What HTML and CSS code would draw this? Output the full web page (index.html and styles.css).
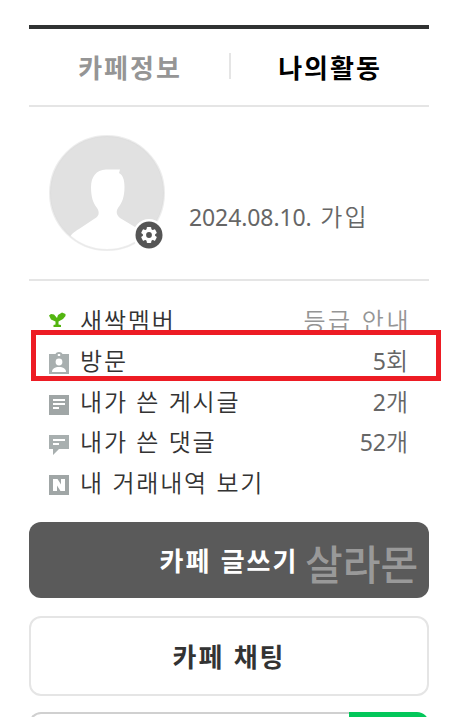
FILE: index.html
```html
<!DOCTYPE html>
<html lang="ko">
<head>
    <meta charset="utf-8">
    <title>나의활동</title>
    <link rel="stylesheet" href="styles.css">
</head>
<body>
    <div id="cafe-side">
        <div class="tabs">
            <a class="tab">카페정보</a>
            <a class="tab active">나의활동</a>
        </div>

        <div class="profile">
            <div class="avatar">
                <svg width="116" height="116" viewBox="0 0 116 116">
                    <defs>
                        <clipPath id="circle"><circle cx="58" cy="58" r="57"/></clipPath>
                    </defs>
                    <circle cx="58" cy="58" r="57" fill="#e1e1e1"/>
                    <path clip-path="url(#circle)" fill="#fff" d="M42 52C42 42 47 35 57 34.500L71 34.500L70 38C74 40 75.500 45 75.500 52C75.500 62 73 68 69 73C67 76 67 80 71 83L86 92C92 96 94 99 95 104V118H20V104C22 99 25 97 30 94L45 84C50 81 51 78 48 73C44 68 42 62 42 52Z"/>
                    <circle cx="58" cy="58" r="57" fill="none" stroke="#dcdcdc" stroke-opacity=".5" stroke-width="2"/>
                </svg>
                <svg class="setting" width="32" height="32" viewBox="0 0 32 32">
                    <circle cx="16" cy="16" r="16" fill="#fff"/>
                    <circle cx="16" cy="16" r="13.500" fill="#555"/>
                    <g fill="#fff">
                        <circle cx="16" cy="16" r="6.200"/>
                        <rect id="tooth" x="13.700" y="8" width="4.600" height="16" rx="1"/>
                        <use href="#tooth" transform="rotate(60 16 16)"/>
                        <use href="#tooth" transform="rotate(120 16 16)"/>
                    </g>
                    <circle cx="16" cy="16" r="2.900" fill="#555"/>
                </svg>
            </div>
            <p class="join-date"><span class="num">2024.08.10.</span> 가입</p>
        </div>

        <ul class="activity">
            <li>
                <svg class="icon icon-level" width="20" height="20" viewBox="0 0 20 20">
                    <path fill="#53b510" d="M0 4.500L2 3L5 3.500L8 7L9 4L13 1.500L16.500 3V5L14 8L9.500 10.500V13.500L12 14V16H4.500V14L6.500 13.500V10.500L2 8.500Z"/>
                </svg>
                <span class="name">새싹멤버</span>
                <span class="count guide">등급 안내</span>
            </li>
            <li>
                <svg class="icon icon-visit" width="20" height="22" viewBox="0 0 20 22">
                    <path fill="#a8afaf" fill-rule="evenodd" d="M0 2H6.500C7 .7 8.300 0 10 0S13 .7 13.500 2H20V22H0ZM8.800 2V4H11.200V2Z"/>
                    <circle cx="10" cy="10" r="3.400" fill="#fff"/>
                    <path fill="#fff" d="M3 20C3 16.500 6 15 10 15S17 16.500 17 20Z"/>
                </svg>
                <span class="name">방문</span>
                <span class="count"><span class="num">5</span>회</span>
            </li>
            <li>
                <svg class="icon" width="20" height="20" viewBox="0 0 20 20">
                    <path fill="#a0a6a6" d="M0 0H20V20H0Z"/>
                    <path fill="#fff" d="M4 4H16V6H4ZM4 8H16V10H4ZM4 12H10V14H4Z"/>
                </svg>
                <span class="name">내가 쓴 게시글</span>
                <span class="count"><span class="num">2</span>개</span>
            </li>
            <li>
                <svg class="icon" width="20" height="20" viewBox="0 0 20 20">
                    <path fill="#a8afaf" d="M0 0H20V14H10L4 20V14H0Z"/>
                    <path fill="#fff" d="M4 4H16V6H4ZM4 8H10V10H4Z"/>
                </svg>
                <span class="name">내가 쓴 댓글</span>
                <span class="count"><span class="num">52</span>개</span>
            </li>
            <li>
                <svg class="icon icon-trade" width="20" height="20" viewBox="0 0 20 20">
                    <path fill="#a0a6a6" d="M0 0H20V20H0Z"/>
                    <path fill="#fff" d="M4 4H8.500L12 9.500V4H16V16H11.500L8 10.500V16H4Z"/>
                </svg>
                <span class="name">내 거래내역 보기</span>
            </li>
        </ul>
        <div class="highlight"></div>

        <a class="btn btn-write">카페 글쓰기<span class="watermark">살라몬</span></a>
        <a class="btn btn-chat">카페 채팅</a>

        <div class="search">
            <div class="search-input"></div>
            <div class="search-button"></div>
        </div>
    </div>
</body>
</html>
```

FILE: styles.css
```css
* {
    box-sizing: border-box;
}

body {
    margin: 0;
    background-color: #fff;
    color: #333;
    font-family: "Noto Sans CJK KR", sans-serif;
    font-size: 24px;
    font-weight: 350;
}

#cafe-side {
    position: relative;
    width: 400px;
    margin: 25px 0 0 29px;
    border-top: 4px solid #303232;
}

/* Tabs */
.tabs {
    display: flex;
    height: 78px;
    border-bottom: 2px solid #e5e5e5;
}

.tab {
    flex: 1;
    padding: 19px 0 0 2px;
    line-height: 38px;
    text-align: center;
    font-size: 26px;
    font-weight: bold;
    letter-spacing: 2px;
    color: #959595;
}

.tab.active {
    color: #000;
    background: linear-gradient(#e5e5e5, #e5e5e5) no-repeat 0 24px / 2px 26px;
}

/* Profile */
.profile {
    display: flex;
    height: 174px;
    padding: 28px 20px 0;
    border-bottom: 2px solid #e5e5e5;
}

.avatar {
    position: relative;
    width: 116px;
    height: 116px;
}

.setting {
    position: absolute;
    left: 84px;
    top: 84px;
}

.join-date {
    margin: 62px 0 0 24px;
    line-height: 38px;
    letter-spacing: 2px;
    color: #666;
}

.num {
    font-family: "Noto Sans", sans-serif;
    font-size: 23px;
    font-weight: 400;
    letter-spacing: -0.1px;
}

/* Activity list */
.activity {
    list-style: none;
    height: 241px;
    margin: 0;
    padding: 18px 20px 0;
}

.activity li {
    display: flex;
    align-items: center;
    height: 40.500px;
}

.icon {
    margin-top: 9px;
}

.icon-level {
    margin-top: 4px;
}

.icon-visit {
    margin-top: 7px;
}

.icon-trade {
    margin-top: 8px;
}

.name {
    margin-left: 11px;
    letter-spacing: 1.800px;
    white-space: nowrap;
}

.count {
    margin-left: auto;
    letter-spacing: 1px;
    color: #666;
    white-space: nowrap;
}

.guide {
    letter-spacing: 2.500px;
    margin-right: -2px;
    color: #959595;
}

.highlight {
    position: absolute;
    left: 2px;
    top: 301px;
    width: 410px;
    height: 51px;
    border: 5px solid #ed1c24;
}

/* Buttons */
.btn {
    display: block;
    position: relative;
    border-radius: 12px;
    text-align: center;
    font-size: 26px;
    font-weight: bold;
    letter-spacing: 2px;
}

.btn-write {
    height: 76px;
    line-height: 76px;
    background-color: #5a5a5a;
    color: #fff;
}

.watermark {
    position: absolute;
    left: 276px;
    top: 2px;
    font-size: 41px;
    font-weight: 500;
    letter-spacing: 0;
    color: #999;
}

.btn-chat {
    height: 80px;
    margin-top: 18px;
    border: 2px solid #e5e5e5;
    line-height: 76px;
}

/* Search, only its top edge is visible */
.search {
    display: flex;
    height: 5px;
    margin-top: 16px;
    overflow: hidden;
}

.search-input {
    flex: 1;
    height: 76px;
    border: 2px solid #d0d0d0;
    border-right: 0;
    border-radius: 12px 0 0 12px;
}

.search-button {
    width: 80px;
    height: 76px;
    background-color: #03c75a;
    border-radius: 0 12px 12px 0;
}
```
